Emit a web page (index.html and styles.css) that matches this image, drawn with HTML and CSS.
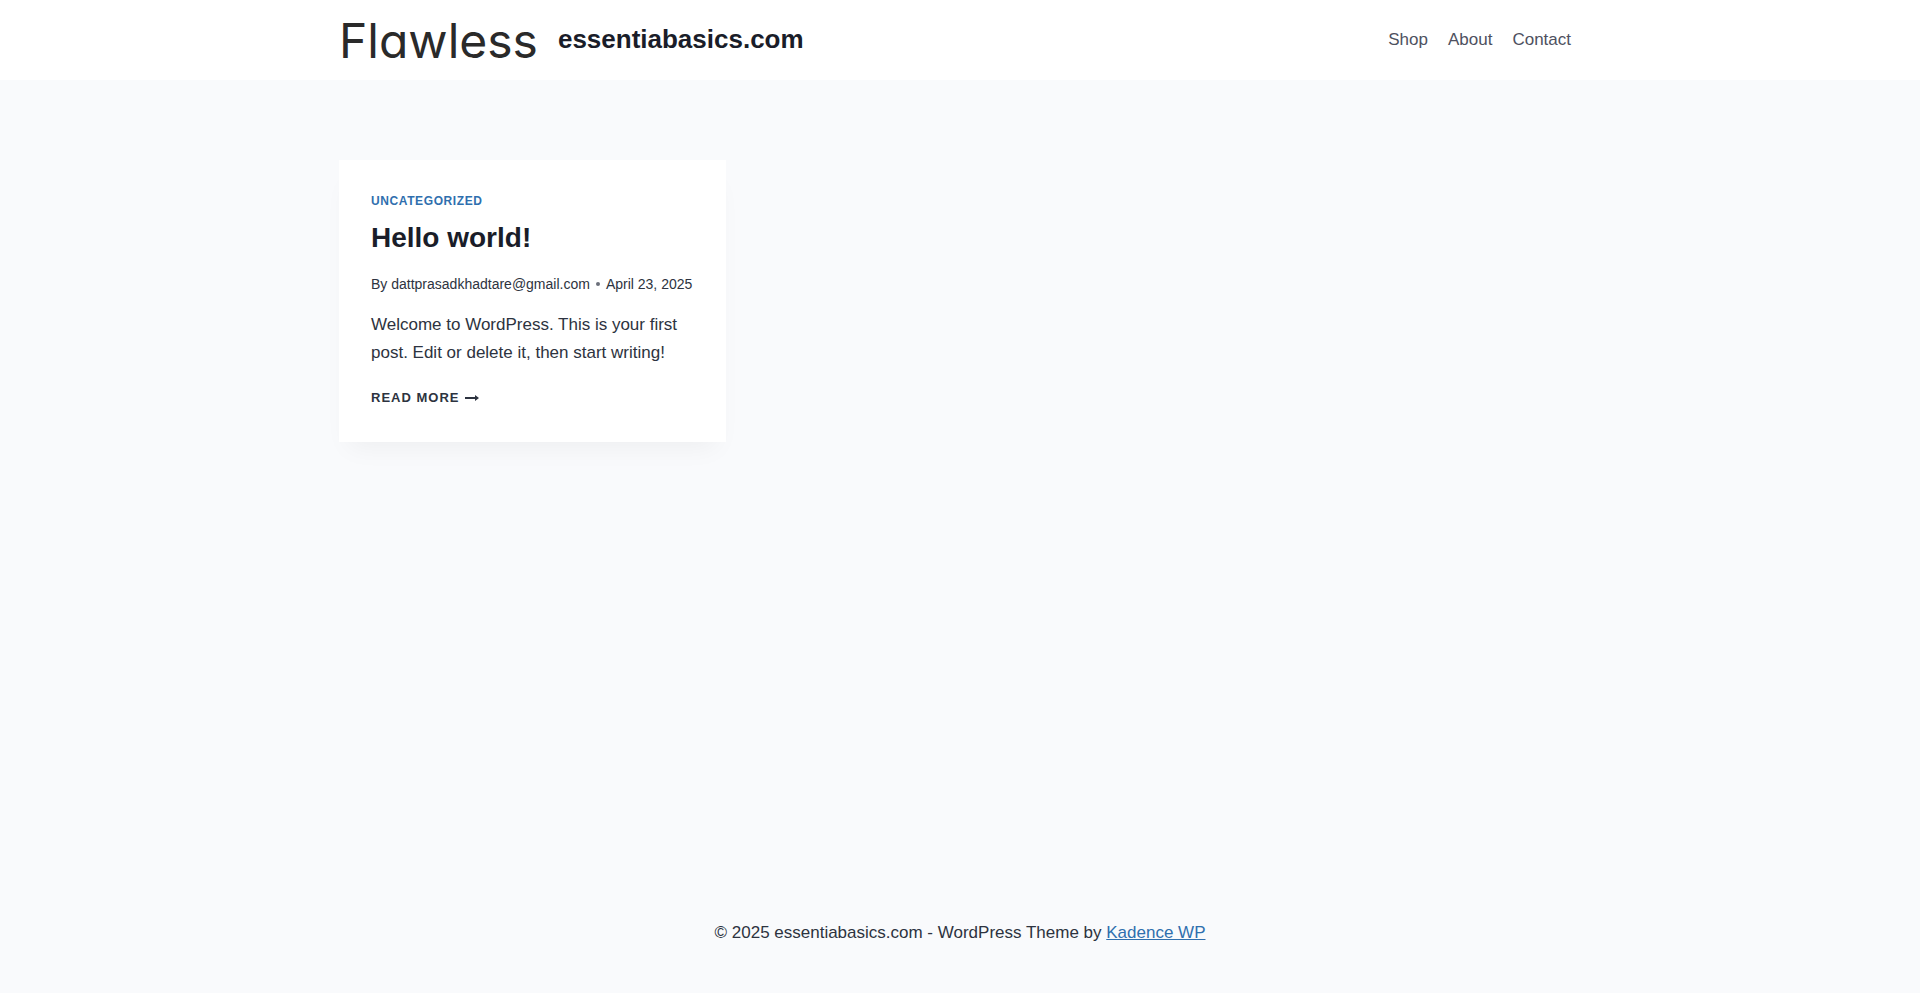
FILE: index.html
```html
<!DOCTYPE html>
<html lang="en">
<head>
    <meta charset="UTF-8">
    <meta name="viewport" content="width=device-width, initial-scale=1.0">
    <title>essentiabasics.com</title>
    <link rel="stylesheet" href="styles.css">
</head>
<body>
    <header class="site-header">
        <div class="container header-row">
            <a class="brand" href="#">
                <span class="logo">Flawless</span>
                <span class="site-title">essentiabasics.com</span>
            </a>
            <nav class="main-nav" aria-label="Primary">
                <a href="#">Shop</a>
                <a href="#">About</a>
                <a href="#">Contact</a>
            </nav>
        </div>
    </header>
    <main class="site-main">
        <div class="container post-grid">
            <article class="post-card">
                <a class="category" href="#">Uncategorized</a>
                <h2 class="post-title"><a href="#">Hello world!</a></h2>
                <div class="post-meta">
                    <span>By <a href="#">dattprasadkhadtare@gmail.com</a></span>
                    <span class="dot"></span>
                    <time datetime="2025-04-23">April 23, 2025</time>
                </div>
                <p class="excerpt">Welcome to WordPress. This is your first post. Edit or delete it, then start writing!</p>
                <a class="read-more" href="#">Read More
                    <svg class="arrow" viewBox="0 0 14 8" aria-hidden="true">
                        <path d="M0 3h10V1l4 3-4 3V5H0z" fill="currentColor"/>
                    </svg>
                </a>
            </article>
        </div>
    </main>
    <footer class="site-footer">
        <p>&copy; 2025 essentiabasics.com - WordPress Theme by <a href="#">Kadence WP</a></p>
    </footer>
</body>
</html>
```
FILE: styles.css
```css
* {
    box-sizing: border-box;
}
body {
    margin: 0;
    min-height: 100vh;
    display: flex;
    flex-direction: column;
    font-family: "Liberation Sans", Arial, sans-serif;
    font-size: 17px;
    line-height: 28px;
    color: #2d3340;
    background: #f9fafc;
}
.container {
    width: 100%;
    max-width: 1290px;
    margin: 0 auto;
    padding: 0 24px;
}
.site-header {
    background: white;
}
.header-row {
    display: flex;
    justify-content: space-between;
    align-items: center;
    min-height: 80px;
}
.brand {
    display: flex;
    align-items: center;
    gap: 20px;
    color: #1a1d29;
    text-decoration: none;
}
.logo {
    padding-top: 2px;
    font-family: Inter, sans-serif;
    font-size: 48px;
    font-weight: 400;
    font-feature-settings: "cv11";
    line-height: 78px;
    color: #2a2a2a;
}
.site-title {
    padding-bottom: 2px;
    font-size: 26px;
    font-weight: bold;
}
.main-nav {
    display: flex;
}
.main-nav a {
    padding: 10px;
    color: #4e5160;
    text-decoration: none;
}
.site-main {
    flex: 1;
    padding: 80px 0;
}
.post-grid {
    display: grid;
    grid-template-columns: repeat(3, 1fr);
    gap: 40px;
}
.post-card {
    padding: 32px;
    background: white;
    box-shadow: 0 15px 25px -10px rgba(0, 0, 0, 0.05);
}
.post-card a {
    color: inherit;
    text-decoration: none;
}
.post-card .category {
    display: block;
    font-size: 12px;
    line-height: 18px;
    font-weight: bold;
    letter-spacing: 0.05em;
    text-transform: uppercase;
    color: #2f6fae;
}
.post-title {
    margin: 7px 0 14px;
    font-size: 28px;
    line-height: 42px;
    color: #1a1d29;
}
.post-meta {
    display: flex;
    flex-wrap: wrap;
    align-items: center;
    gap: 0 6px;
    font-size: 14px;
    line-height: 22px;
}
.dot {
    width: 4px;
    height: 4px;
    border-radius: 50%;
    background: #6b6f7a;
}
.excerpt {
    margin: 16px 0 18px;
}
.post-card .read-more {
    display: flex;
    align-items: center;
    gap: 6px;
    font-size: 13px;
    line-height: 25px;
    font-weight: bold;
    letter-spacing: 1px;
    text-transform: uppercase;
}
.arrow {
    width: 14px;
    height: 8px;
}
.site-footer {
    padding: 30px 24px 46px;
    text-align: center;
}
.site-footer p {
    margin: 0;
}
.site-footer a {
    color: #2f6fae;
}
@media (max-width: 1024px) {
    .post-grid {
        grid-template-columns: repeat(2, 1fr);
    }
}
@media (max-width: 768px) {
    .header-row {
        flex-wrap: wrap;
    }
    .post-grid {
        grid-template-columns: 1fr;
    }
}
```
